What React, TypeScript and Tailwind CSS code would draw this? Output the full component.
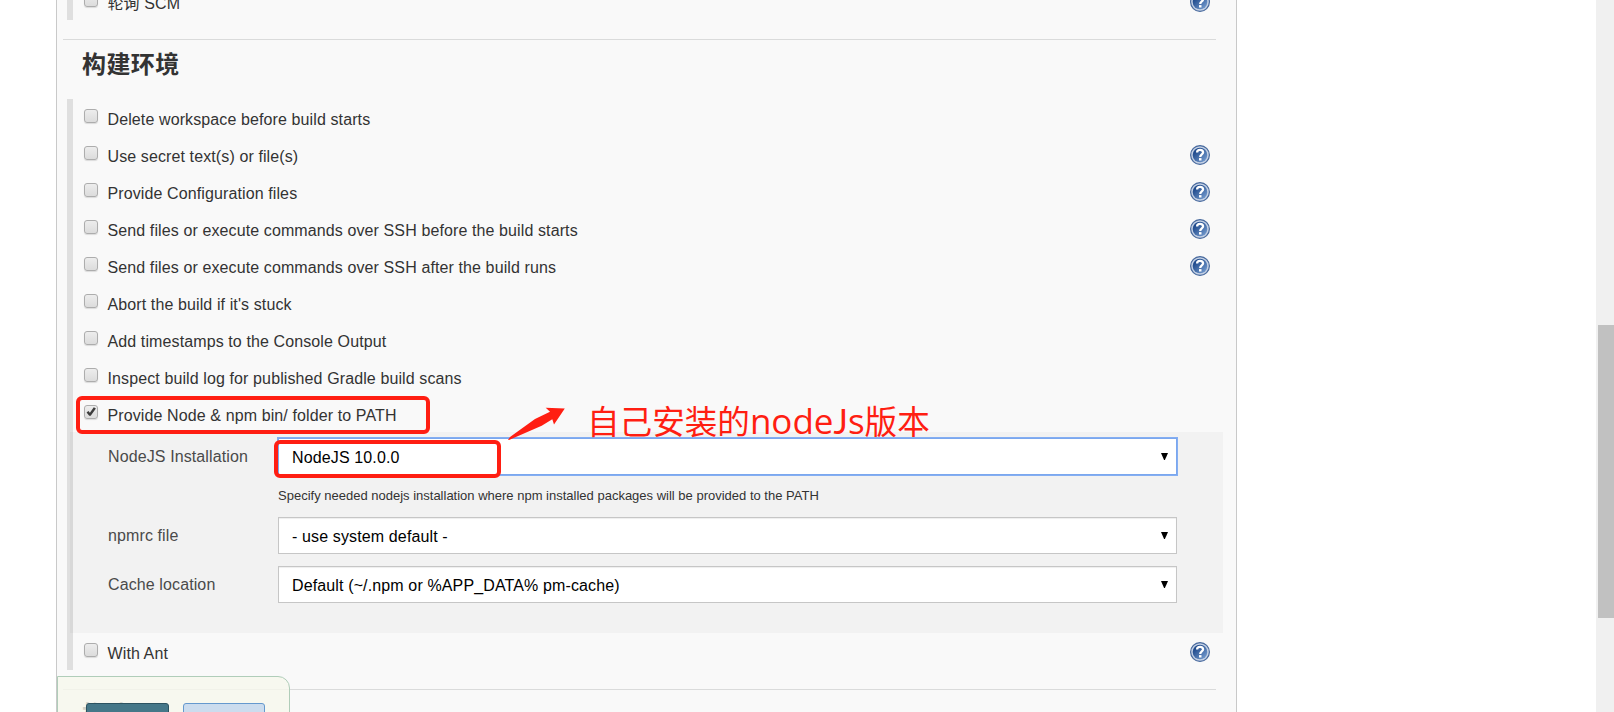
import React from "react";

function Checkbox({ checked = false }: { checked?: boolean }) {
  return (
    <span className="block h-[14px] w-[14px] shrink-0 rounded-[3px] border border-[#adadad] bg-linear-to-b from-[#ededed] to-[#dcdcdc] shadow-[0_1px_1px_rgba(0,0,0,0.12)]">
      {checked && (
        <svg viewBox="0 0 12 12" className="block h-3 w-3">
          <path d="M1.6 6.4 L3.4 4.9 L4.9 6.7 L8.8 1.2 L10.9 2.6 L5.7 9.8 L4.2 9.8 Z" fill="#3c3c3c" />
        </svg>
      )}
    </span>
  );
}

function Help() {
  return (
    <svg viewBox="0 0 20 20" className="block h-5 w-5 shrink-0">
      <defs>
        <linearGradient id="helpFill" x1="0" y1="0" x2="1" y2="1">
          <stop offset="0.2" stopColor="#1f4a8c" />
          <stop offset="1" stopColor="#7fa5d6" />
        </linearGradient>
      </defs>
      <circle cx="10" cy="10" r="9.4" fill="#c3d0e4" stroke="#47699d" strokeWidth="1.2" />
      <circle cx="10" cy="10" r="7.3" fill="url(#helpFill)" />
      <path d="M7.1 7.4 C7.1 4.1 13.1 4.0 13.1 7.3 C13.1 9.4 10.2 9.3 10.2 12" fill="none" stroke="#fff" strokeWidth="2.3" />
      <rect x="9" y="13.1" width="2.5" height="2.4" fill="#fff" />
    </svg>
  );
}

function OptionRow({ label, help = false, checked = false }: { label: string; help?: boolean; checked?: boolean }) {
  return (
    <div className="flex h-[37px] items-start pr-4 pl-[11px]">
      <div className="pt-[10px]">
        <Checkbox checked={checked} />
      </div>
      <div className="ml-[9.5px] flex-1 pt-3 text-base leading-[18px] tracking-[0.11px] whitespace-nowrap">{label}</div>
      {help && (
        <div className="pt-[9px]">
          <Help />
        </div>
      )}
    </div>
  );
}

function Select({ value, focused = false }: { value: string; focused?: boolean }) {
  return (
    <div
      className={
        "flex h-[37px] w-[899px] items-center justify-between border bg-white pr-2 pl-[13px] text-base leading-[18px] tracking-[0.13px] text-black " +
        (focused
          ? "border-[#7ba7ee] shadow-[0_0_0_1px_#84aef2]"
          : "border-[#c6c6c6] shadow-[inset_0_1px_1px_rgba(0,0,0,0.07)]")
      }
    >
      <span className="pt-0.5">{value}</span>
      <svg viewBox="0 0 7 7" className="block h-[7px] w-[7px]">
        <path d="M0 0H7L3.9 7H3.1Z" fill="#000" />
      </svg>
    </div>
  );
}

function Field({ label, children }: { label: string; children: React.ReactNode }) {
  return (
    <div className="flex">
      <div className="w-[170px] shrink-0 pt-[10px] text-base leading-[18px] tracking-[0.11px] text-[#4a4a4a]">{label}</div>
      {children}
    </div>
  );
}

const OPTIONS = [
  { label: "Delete workspace before build starts" },
  { label: "Use secret text(s) or file(s)", help: true },
  { label: "Provide Configuration files", help: true },
  { label: "Send files or execute commands over SSH before the build starts", help: true },
  { label: "Send files or execute commands over SSH after the build runs", help: true },
  { label: "Abort the build if it's stuck" },
  { label: "Add timestamps to the Console Output" },
  { label: "Inspect build log for published Gradle build scans" },
  { label: "Provide Node & npm bin/ folder to PATH", checked: true },
];

export default function App() {
  return (
    <div className="relative flex h-[712px] w-[1614px] justify-between overflow-hidden bg-white font-['Liberation_Sans','Noto_Sans_CJK_SC',sans-serif] text-[#333]">
      <main className="ml-14 h-[712px] w-[1181px] overflow-hidden border-x border-[#c9c9c9] bg-[#f9f9f9]">
        <div className="mt-[-17px] ml-[10px] h-[37px] w-[1159px] border-l-[6px] border-[#dfdfdf]">
          <div className="w-[1153px]">
            <OptionRow label="轮询 SCM" help />
          </div>
        </div>
        <div className="mt-[19px] ml-[6px] h-px w-[1153px] bg-[#dadbdb]" />
        <h2 className="mt-[7px] ml-[25px] h-[52px] text-2xl leading-9 font-bold tracking-[0.4px]">构建环境</h2>
        <div className="ml-[10px] w-[1156px] border-l-[6px] border-[#dfdfdf]">
          <div className="w-[1153px]">
            {OPTIONS.map((o) => (
              <OptionRow key={o.label} {...o} />
            ))}
          </div>
          <div className="ml-[-3px] h-[201px] w-[1153px] bg-black/[0.027] pt-[6px] pl-[38px]">
            <Field label="NodeJS Installation">
              <Select value="NodeJS 10.0.0" focused />
            </Field>
            <div className="mt-[13px] ml-[170px] h-[29px] text-[13px] leading-4">
              Specify needed nodejs installation where npm installed packages will be provided to the PATH
            </div>
            <Field label="npmrc file">
              <Select value="- use system default -" />
            </Field>
            <div className="mt-3">
              <Field label="Cache location">
                <Select value="Default (~/.npm or %APP_DATA% pm-cache)" />
              </Field>
            </div>
          </div>
          <div className="w-[1153px]">
            <OptionRow label="With Ant" help />
          </div>
        </div>
        <div className="mt-[19px] ml-[6px] h-px w-[1153px] bg-[#dadbdb]" />
        <h2 className="mt-[7px] ml-[25px] text-2xl leading-9 font-bold tracking-[0.4px]">构建</h2>
      </main>
      <div className="flex w-[18px] bg-[#f0f0f0] pt-[325px] pl-[2px]">
        <div className="h-[293px] w-4 bg-[#c1c1c1]" />
      </div>

      <div className="absolute top-[676px] left-[57px] flex h-[60px] w-[233px] gap-[14px] rounded-tr-xl border border-[#b0cdb9] bg-[#f6f8ec]/80 pt-[26px] pl-[28px]">
        <div className="h-[30px] w-[83px] rounded-[3px] border border-[#2c5361] bg-[#457788]" />
        <div className="h-[30px] w-[82px] rounded-[3px] border border-[#6599ce] bg-[#cbdcee]" />
      </div>

      <div className="absolute top-[396px] left-[76px] h-[38px] w-[354px] rounded-[6px] border-4 border-[#ff1e12]" />
      <div className="absolute top-[440px] left-[274px] h-[38px] w-[227px] rounded-[6px] border-4 border-[#ff1e12]" />
      <svg viewBox="508 405 60 37" className="absolute top-[405px] left-[508px] h-[37px] w-[60px]">
        <path d="M508 440 L510 437 L535 419 L550 411.7 L545.7 407.7 L564.8 408.5 L554 424.5 L552.3 419.3 L541.7 425.7 L509 440 Z" fill="#ff1e12" />
      </svg>
      <div className="absolute top-[396px] left-[587px] flex items-baseline font-['Noto_Sans_CJK_SC',sans-serif] text-[32.6px] leading-[48px] font-normal whitespace-nowrap text-[#ff1e12]">
        <span>自己安装的</span>
        <span className="font-['Open_Sans',sans-serif] text-[35px] font-normal">
          node<span className="font-['Lato',sans-serif] text-[34px]">J</span>s
        </span>
        <span>版本</span>
      </div>
    </div>
  );
}
